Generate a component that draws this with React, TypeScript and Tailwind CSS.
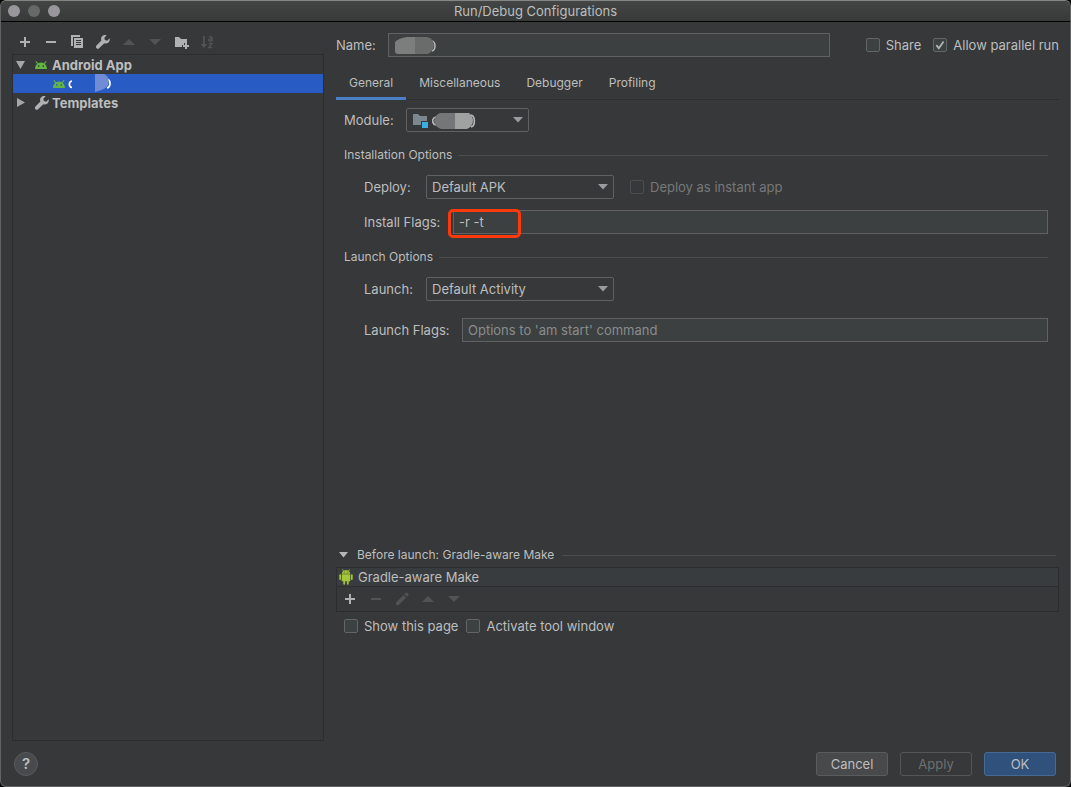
import { useState } from "react";
import type { ReactNode } from "react";

const ICON = "#afb1b3";
const DIM = "#515354";

function Svg({ children, size = 16 }: { children: ReactNode; size?: number }) {
  return (
    <svg width={size} height={size} viewBox="0 0 16 16" className="block shrink-0" aria-hidden="true">
      {children}
    </svg>
  );
}

const PlusIcon = () => (
  <Svg>
    <path d="M7 3h2v4h4v2H9v4H7V9H3V7h4z" fill={ICON} />
  </Svg>
);

const MinusIcon = ({ color = ICON }: { color?: string }) => (
  <Svg>
    <path d="M3 7h10v2H3z" fill={color} />
  </Svg>
);

const CopyIcon = () => (
  <Svg>
    <path d="M2 1h9v2H4v9H2z" fill={ICON} />
    <path fillRule="evenodd" d="M5 4h9v10H5zM7 6v1h5V6zm0 2v1h5V8zm0 2v1h5v-1z" fill={ICON} />
  </Svg>
);

const WrenchIcon = () => (
  <Svg>
    <path
      d="M14.700 4.300l-2.500 2.400-2.300-.6-.6-2.300 2.400-2.500C10 .7 8.200 1.100 7.100 2.300 6 3.500 5.800 5.100 6.400 6.500L1.500 11.600c-.8.800-.8 1.900 0 2.600.7.800 1.900.8 2.600 0l5.200-4.900c1.400.5 3 .200 4.200-.9 1.100-1.100 1.600-2.700 1.200-4.100z"
      fill={ICON}
    />
  </Svg>
);

const UpIcon = () => (
  <Svg>
    <path d="M2 11l6-6 6 6z" fill={DIM} />
  </Svg>
);

const DownIcon = () => (
  <Svg>
    <path d="M2 5h12l-6 6z" fill={DIM} />
  </Svg>
);

const FolderPlusIcon = () => (
  <Svg>
    <path d="M2 3h4l2 2h6v4h-3v2H9v2H2z" fill={ICON} />
    <path d="M12 9h2v2h2v2h-2v2h-2v-2h-2v-2h2z" fill={ICON} />
  </Svg>
);

const SortIcon = () => (
  <Svg>
    <path d="M4 2h1.800v8h2.400L4.900 14 1.500 10H4z" fill={DIM} />
    <path
      d="M9.900 3.200c1-.9 3.300-.8 3.300.8v3M13.200 4.800c-2-.2-3.600 0-3.600 1.200 0 1.400 2.600 1.300 3.600 0M9.700 9.500h3.400l-3.400 4.200h3.700"
      fill="none"
      stroke={DIM}
      strokeWidth="1.300"
    />
  </Svg>
);

const PencilIcon = () => (
  <Svg>
    <path d="M2 11.400l7.500-7.500 2.700 2.700L4.700 14H2zM10.400 3l1.200-1.200c.5-.5 1-.5 1.500 0l1.200 1.200c.5.500.5 1 0 1.500l-1.200 1.200z" fill={DIM} />
  </Svg>
);

const AndroidHead = () => (
  <svg width="12" height="8" viewBox="0 0 12 8" className="block shrink-0" aria-hidden="true">
    <path d="M.8.400l2 2.300M11.200.400l-2 2.300" stroke="#62b543" strokeWidth="1.100" />
    <path
      fillRule="evenodd"
      d="M0 8C.2 4.400 2.400 1.500 6 1.500S11.800 4.400 12 8zM3 4.300v1.400h1.400V4.300zm4.600 0v1.400H9V4.300z"
      fill="#62b543"
    />
  </svg>
);

const AndroidRobot = () => (
  <svg width="14" height="16" viewBox="0 0 14 16" className="block shrink-0" aria-hidden="true">
    <path
      fillRule="evenodd"
      d="M3.800.2l1 1.500C5.500 1.300 6.200 1.200 7 1.200s1.500.1 2.200.5l1-1.500.6.4-.9 1.600c.8.600 1.300 1.500 1.400 2.500H2.700c.1-1 .6-1.900 1.400-2.500L3.200.600zM4.800 2.700v.9h.9v-.9zm3.500 0v.9h.9v-.9z"
      fill="#a4c639"
    />
    <path d="M2.700 5.300h8.600v6.900H9.700v2.600c0 1.200-1.800 1.200-1.800 0v-2.600H6.100v2.600c0 1.200-1.800 1.200-1.800 0v-2.600H2.700z" fill="#a4c639" />
    <rect x="0.300" y="5.300" width="1.700" height="5.600" rx="0.850" fill="#a4c639" />
    <rect x="12" y="5.300" width="1.700" height="5.600" rx="0.850" fill="#a4c639" />
  </svg>
);

const ModuleIcon = () => (
  <Svg>
    <path d="M1 1h5l2 2h7v5H9v4H1z" fill="#7c8790" />
    <path d="M10 9h6v6h-6z" fill="#3aaee0" />
  </Svg>
);

function Combo({ label, options, className }: { label: string; options: string[]; className: string }) {
  return (
    <div className={`relative ${className}`}>
      <select
        id={label}
        className="block h-6 w-full appearance-none rounded-[2px] border border-[#5f6162] bg-[#363839] px-[5px] text-[13px] leading-4 text-[#bdbebf] outline-none"
      >
        {options.map((o) => (
          <option key={o}>{o}</option>
        ))}
      </select>
      <svg width="10" height="6" viewBox="0 0 10 6" className="pointer-events-none absolute top-[9px] right-[6px]" aria-hidden="true">
        <path d="M0 0h10L5 5.500z" fill="#999b9e" />
      </svg>
    </div>
  );
}

function Check({ label, checked = false, disabled = false }: { label: string; checked?: boolean; disabled?: boolean }) {
  return (
    <label className={`flex items-center gap-[6px] whitespace-nowrap ${disabled ? "text-[#777879]" : ""}`}>
      <span className="relative block size-[14px]">
        <input
          type="checkbox"
          defaultChecked={checked}
          disabled={disabled}
          className="peer block size-[14px] appearance-none rounded-[2px] border border-[#636566] bg-[#3c4142] disabled:border-[#4c4e4f] disabled:bg-[#363839]"
        />
        <svg viewBox="0 0 14 14" className="pointer-events-none absolute inset-0 hidden peer-checked:block" aria-hidden="true">
          <path d="M3.300 7.200l2.500 3 4.800-6.700" fill="none" stroke="#b0b2b3" strokeWidth="1.800" />
        </svg>
      </span>
      {label}
    </label>
  );
}

function Section({ title }: { title: string }) {
  return (
    <div className="flex h-5 items-center gap-[6px]">
      <h2 className="text-[12px]">{title}</h2>
      <div className="h-px flex-1 bg-[#4a4c4d]" />
    </div>
  );
}

function IconButton({ label, disabled, children }: { label: string; disabled?: boolean; children: ReactNode }) {
  return (
    <button type="button" aria-label={label} disabled={disabled} className="block size-4">
      {children}
    </button>
  );
}

const field = "block h-6 min-w-0 border border-[#5f6162] bg-[#3c4041] px-[5px] text-[13px] text-[#bdbebf] outline-none placeholder:text-[#8a8c8d]";
const TABS = ["General", "Miscellaneous", "Debugger", "Profiling"];

export default function App() {
  const [tab, setTab] = useState("General");
  return (
    <div className="flex min-h-screen bg-black font-['Inter','Liberation_Sans',sans-serif] text-[13px] leading-4 text-[#bdbebf]">
      <div className="flex flex-1 flex-col overflow-hidden rounded-[6px] border border-[#616364] border-t-[#838684] bg-[#363839]">
        <header className="relative flex h-[21px] items-center justify-center border-b border-black bg-linear-to-b from-[#434644] to-[#373a39]">
          <div className="absolute left-[7px] flex gap-2">
            <span className="size-3 rounded-full bg-[#99979c]" />
            <span className="size-3 rounded-full bg-[#676968]" />
            <span className="size-3 rounded-full bg-[#99979c]" />
          </div>
          <h1>Run/Debug Configurations</h1>
        </header>

        <main className="flex flex-1">
          <aside className="ml-[11px] flex w-[312px] flex-col pt-3">
            <div className="flex gap-[10px] pb-1 pl-[5px]">
              <IconButton label="Add"><PlusIcon /></IconButton>
              <IconButton label="Remove"><MinusIcon /></IconButton>
              <IconButton label="Copy"><CopyIcon /></IconButton>
              <IconButton label="Edit templates"><WrenchIcon /></IconButton>
              <IconButton label="Move up" disabled><UpIcon /></IconButton>
              <IconButton label="Move down" disabled><DownIcon /></IconButton>
              <IconButton label="New folder"><FolderPlusIcon /></IconButton>
              <IconButton label="Sort" disabled><SortIcon /></IconButton>
            </div>
            <ul className="flex-1 border border-[#2b2d2e] font-bold">
              <li className="flex h-[19px] items-center pl-[3px]">
                <svg width="9" height="8" viewBox="0 0 9 8" className="mr-[10px]" aria-hidden="true">
                  <path d="M0 0h9L4.500 8z" fill="#a4a6a7" />
                </svg>
                <AndroidHead />
                <span className="ml-[5px]">Android App</span>
              </li>
              <li className="flex h-[19px] items-center bg-[#285bc4] pl-10">
                <AndroidHead />
                <svg width="46" height="19" viewBox="0 0 46 19" className="ml-[2px]" aria-hidden="true">
                  <path d="M5 7C1.500 7.500 1.500 13 5 13.500" fill="none" stroke="#fff" strokeWidth="1.700" />
                  <path d="M40 5c4 1 4 8 0 9" fill="none" stroke="#fff" strokeWidth="1.700" />
                  <path d="M28 0h9c4 2 6 6 4 11-1 3-6 5-13 7z" fill="#718cd6" />
                </svg>
              </li>
              <li className="flex h-[19px] items-center pl-1">
                <svg width="8" height="9" viewBox="0 0 8 9" className="mr-[9px]" aria-hidden="true">
                  <path d="M0 0v9l8-4.500z" fill="#a4a6a7" />
                </svg>
                <WrenchIcon />
                <span className="ml-[2px]">Templates</span>
              </li>
            </ul>
          </aside>

          <section className="mr-[11px] ml-3 flex min-w-0 flex-1 flex-col pt-[11px]">
            <div className="flex items-center">
              <label htmlFor="name" className="w-[52px]">Name:</label>
              <div className="relative mr-9 flex-1">
                <input id="name" className={`${field} w-full`} />
                <svg width="44" height="18" viewBox="0 0 44 18" className="pointer-events-none absolute top-1 left-[6px]" aria-hidden="true">
                  <path d="M38 4c4 1 4 9 0 10" fill="none" stroke="#b9babb" strokeWidth="1.500" />
                  <path d="M1 5Q5 1 13 0h8v17H4Q1 17 1 14z" fill="#7c7e7d" />
                  <path d="M21 0h12q7 2 7 8t-6 9H21z" fill="#6a6c6b" />
                </svg>
              </div>
              <div className="flex gap-3">
                <Check label="Share" />
                <Check label="Allow parallel run" checked />
              </div>
            </div>

            <div role="tablist" className="mt-[10px] flex h-[33px] border-b border-[#2d2f30] text-[12px]">
              {TABS.map((t) => (
                <button
                  key={t}
                  type="button"
                  role="tab"
                  aria-selected={t === tab}
                  onClick={() => setTab(t)}
                  className={`h-[33px] border-b-[3px] px-[13px] pt-[2px] ${t === tab ? "border-[#4a80c8]" : "border-transparent"}`}
                >
                  {t}
                </button>
              ))}
            </div>

            <div className="pr-[11px] pl-2">
              <div className="mt-2 flex items-center">
                <label htmlFor="module" className="w-[62px]">Module:</label>
                <div className="relative w-[123px]">
                  <Combo label="module" options={[""]} className="w-full" />
                  <div className="pointer-events-none absolute top-[5px] left-[6px] flex gap-1">
                    <ModuleIcon />
                    <svg width="44" height="17" viewBox="0 0 44 17" aria-hidden="true">
                      <path d="M4 4C-.5 5-.5 11 4 12M39 2c4.500 1 4.500 11 0 12" fill="none" stroke="#b9babb" strokeWidth="1.600" />
                      <path d="M8 0h15v16H9Q3 14 2 8 3 2 8 0z" fill="#747678" />
                      <path d="M23 0h14q4 3 4 8t-6 8H23z" fill="#a0a1a1" />
                    </svg>
                  </div>
                </div>
              </div>
              <div className="mt-[13px]"><Section title="Installation Options" /></div>
              <div className="mt-[10px] flex items-center pl-5">
                <label htmlFor="deploy" className="w-[62px]">Deploy:</label>
                <Combo label="deploy" options={["Default APK", "APK from app bundle", "Nothing"]} className="mr-4 w-[188px]" />
                <Check label="Deploy as instant app" disabled />
              </div>
              <div className="mt-[11px] flex items-center pl-5">
                <label htmlFor="install-flags" className="w-[89px]">Install Flags:</label>
                <div className="relative flex-1">
                  <input id="install-flags" defaultValue="-r -t" className={`${field} w-full`} />
                  <span className="pointer-events-none absolute -top-px -left-[5px] h-[29px] w-[73px] rounded-[5px] border-[3px] border-[#fb3a0b]" />
                </div>
              </div>
              <div className="mt-[13px]"><Section title="Launch Options" /></div>
              <div className="mt-[10px] flex items-center pl-5">
                <label htmlFor="launch" className="w-[62px]">Launch:</label>
                <Combo label="launch" options={["Default Activity", "Specified Activity", "URL", "Nothing"]} className="w-[188px]" />
              </div>
              <div className="mt-[17px] flex items-center pl-5">
                <label htmlFor="launch-flags" className="w-[98px]">Launch Flags:</label>
                <input id="launch-flags" placeholder="Options to 'am start' command" className={`${field} flex-1`} />
              </div>
            </div>

            <div className="mt-auto">
              <div className="flex h-5 items-center pr-[3px] pl-[3px]">
                <button type="button" className="flex items-center gap-[9px] text-[12px]">
                  <svg width="9" height="6" viewBox="0 0 9 6" aria-hidden="true">
                    <path d="M0 0h9L4.500 5.500z" fill="#b4b6b7" />
                  </svg>
                  Before launch: Gradle-aware Make
                </button>
                <div className="ml-2 h-px flex-1 bg-[#4a4c4d]" />
              </div>
              <div className="mt-[2px] border border-[#2b2d2e]">
                <div className="flex h-[19px] items-center gap-[5px] border-b border-[#2b2d2e] bg-[#383c3e] pl-[2px]">
                  <AndroidRobot />
                  <span>Gradle-aware Make</span>
                </div>
                <div className="flex h-6 items-center gap-[10px] pl-[5px]">
                  <IconButton label="Add task"><PlusIcon /></IconButton>
                  <IconButton label="Remove task" disabled><MinusIcon color={DIM} /></IconButton>
                  <IconButton label="Edit task" disabled><PencilIcon /></IconButton>
                  <IconButton label="Move task up" disabled><UpIcon /></IconButton>
                  <IconButton label="Move task down" disabled><DownIcon /></IconButton>
                </div>
              </div>
              <div className="mt-[6px] mb-[107px] flex gap-2 pl-2">
                <Check label="Show this page" />
                <Check label="Activate tool window" />
              </div>
            </div>
          </section>
        </main>

        <footer className="flex items-center gap-3 pt-[11px] pr-[14px] pb-[10px] pl-[13px]">
          <button
            type="button"
            aria-label="Help"
            className="mr-auto size-6 rounded-full border border-[#595b5c] bg-[#484b4d] text-[15px] font-semibold"
          >
            ?
          </button>
          <button type="button" className="h-6 w-[72px] rounded-[3px] border border-[#5a5c5d] bg-[#47494b]">Cancel</button>
          <button type="button" disabled className="h-6 w-[72px] rounded-[3px] border border-[#535556] text-[#6f7172]">Apply</button>
          <button type="button" className="h-6 w-[72px] rounded-[3px] border border-[#456a94] bg-[#2f517b]">OK</button>
        </footer>
      </div>
    </div>
  );
}
